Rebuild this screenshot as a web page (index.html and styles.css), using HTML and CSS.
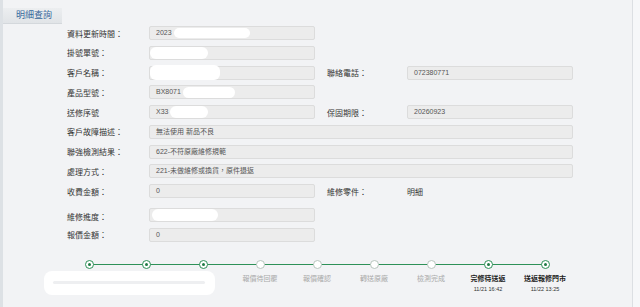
FILE: index.html
```html
<!DOCTYPE html>
<html lang="zh-Hant">
<head>
    <meta charset="UTF-8">
    <meta name="viewport" content="width=device-width, initial-scale=1.0">
    <title>明細查詢</title>
    <link rel="stylesheet" href="styles.css">
</head>
<body>
    <div class="page">
        <div class="side"></div>
        <div class="panel">
            <div class="tab">明細查詢</div>

            <div class="form">
                <div class="label">資料更新時間：</div>
                <div class="field">2023<span class="mask mask-time"></span></div>

                <div class="label">掛號單號：</div>
                <div class="field"><span class="mask mask-reg"></span></div>

                <div class="label">客戶名稱：</div>
                <div class="field"><span class="mask mask-name"></span></div>
                <div class="label label-right">聯絡電話：</div>
                <div class="field">072380771</div>

                <div class="label">產品型號：</div>
                <div class="field">BX8071<span class="mask mask-model"></span></div>

                <div class="label">送修序號</div>
                <div class="field">X33<span class="mask mask-serial"></span></div>
                <div class="label label-right">保固期限：</div>
                <div class="field">20260923</div>

                <div class="label">客戶故障描述：</div>
                <div class="field wide">無法使用 新品不良</div>

                <div class="label">聯強檢測結果：</div>
                <div class="field wide">622-不符原廠維修規範</div>

                <div class="label">處理方式：</div>
                <div class="field wide">221-未做維修或換貨，原件退返</div>

                <div class="label">收費金額：</div>
                <div class="field">0</div>
                <div class="label label-right">維修零件：</div>
                <div class="plain">明細</div>

                <div class="label late">維修進度：</div>
                <div class="field late"><span class="mask mask-progress"></span></div>

                <div class="label">報價金額：</div>
                <div class="field">0</div>
            </div>

            <div class="timeline">
                <div class="step done"><span class="dot"></span><div class="name"></div></div>
                <div class="step done"><span class="dot"></span><div class="name"></div></div>
                <div class="step done"><span class="dot"></span><div class="name"></div></div>
                <div class="step"><span class="dot"></span><div class="name">報價待回覆</div></div>
                <div class="step"><span class="dot"></span><div class="name">報價確認</div></div>
                <div class="step"><span class="dot"></span><div class="name">轉送原廠</div></div>
                <div class="step"><span class="dot"></span><div class="name">檢測完成</div></div>
                <div class="step done"><span class="dot"></span><div class="name">完修待送返</div><div class="date">11/21 16:42</div></div>
                <div class="step done"><span class="dot"></span><div class="name">送返報修門市</div><div class="date">11/22 13:25</div></div>
                <div class="blot"><span></span></div>
            </div>
        </div>
        <div class="edge"></div>
    </div>
</body>
</html>
```

FILE: styles.css
```css
body {
    margin: 0;
    background: #f2f3f5;
    font-family: "Liberation Sans", "Noto Sans CJK TC", sans-serif;
    color: #333;
}
.page {
    display: flex;
    height: 307px;
    overflow: hidden;
}
.side {
    width: 3px;
    background: #dde1e5;
}
.panel {
    width: 629px;
    padding-top: 8px;
    border-right: 1px solid #dcdfe3;
}
.edge {
    flex: 1;
    background: #f6f7f9;
}
.tab {
    width: 46px;
    height: 15px;
    line-height: 15px;
    padding-left: 13px;
    font-size: 9px;
    color: #35679a;
    background: linear-gradient(#eceef0, #e1e4e7);
    border-bottom: 1px solid #d4d8dc;
}
.form {
    margin: 2px 0 0 64px;
    display: grid;
    grid-template-columns: 82px 166px 92px 166px;
    grid-template-rows: repeat(9, 14px) 18px 14px;
    row-gap: 5.75px;
    align-items: center;
}
.label {
    font-size: 8px;
    color: #333;
    grid-column: 1;
    white-space: nowrap;
}
.label-right {
    grid-column: 3;
    padding-left: 12px;
}
.field {
    height: 12px;
    line-height: 12px;
    padding-left: 6px;
    font-size: 7px;
    color: #555;
    background: #ececec;
    border: 1px solid #dcdcdc;
    border-radius: 2px;
    white-space: nowrap;
    overflow: visible;
    display: flex;
    align-items: center;
}
.wide {
    grid-column: 2 / 5;
}
.plain {
    font-size: 8px;
    color: #333;
}
.late {
    align-self: end;
}
.mask {
    display: inline-block;
    background: #fff;
    border-radius: 6px;
    height: 10px;
}
.mask-time { width: 76px; margin-left: 2px; }
.mask-reg { width: 58px; margin-left: -6px; height: 12px; }
.mask-name { width: 70px; margin-left: -6px; height: 15px; }
.mask-model { width: 52px; margin-left: 2px; height: 11px; }
.mask-serial { width: 38px; margin-left: 2px; height: 12px; }
.mask-progress { width: 66px; margin-left: -4px; height: 12px; }

.timeline {
    position: relative;
    display: flex;
    margin: 18px 0 0 57.5px;
}
.step {
    position: relative;
    width: 57px;
    display: flex;
    flex-direction: column;
    align-items: center;
}
.step::before,
.step::after {
    content: "";
    position: absolute;
    top: 4px;
    height: 1.5px;
    width: 50%;
    background: #2e9158;
}
.step::before { left: 0; }
.step::after { right: 0; }
.step:first-child::before,
.step:nth-child(9)::after {
    display: none;
}
.dot {
    position: relative;
    z-index: 1;
    width: 7px;
    height: 7px;
    border-radius: 50%;
    background: #fff;
    border: 1px solid #b8c6be;
    display: flex;
    align-items: center;
    justify-content: center;
}
.done .dot {
    border-color: #2e9158;
}
.done .dot::after {
    content: "";
    width: 3px;
    height: 3px;
    border-radius: 50%;
    background: #1f7a45;
}
.name {
    margin-top: 4px;
    font-size: 7px;
    color: #a9a9a9;
    white-space: nowrap;
}
.done .name {
    color: #222;
    font-weight: bold;
}
.date {
    margin-top: 3px;
    font-size: 5.5px;
    color: #333;
}
.blot {
    position: absolute;
    left: -17px;
    top: 11px;
    width: 171px;
    height: 24px;
    background: #fff;
    border-radius: 8px;
    display: flex;
    align-items: center;
    justify-content: center;
}
.blot span {
    width: 152px;
    height: 3px;
    background: #eeeff1;
    border-radius: 2px;
}
```
